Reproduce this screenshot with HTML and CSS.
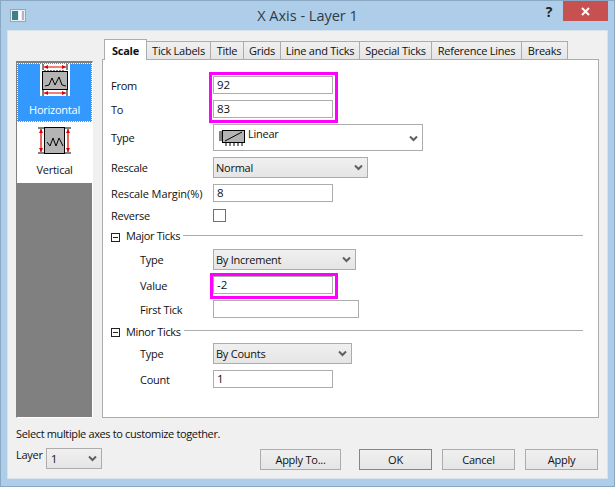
FILE: index.html
```html
<!DOCTYPE html>
<html>
<head>
<meta charset="utf-8">
<title>X Axis - Layer 1</title>
<link rel="stylesheet" href="styles.css">
</head>
<body>

<svg class="defs" width="0" height="0">
<symbol id="chev" viewBox="0 0 9 7"><path d="M1 1.5 L4.5 5 L8 1.5" fill="none" stroke="#606060" stroke-width="2"/></symbol>
<symbol id="minus" viewBox="0 0 9 9"><rect x="0.5" y="0.5" width="8" height="8" fill="#fff" stroke="#222"/><path d="M2 4.5 H7" stroke="#222"/></symbol>
</svg>

<div class="window">

<div class="titlebar">
<svg class="appicon" width="16" height="13" viewBox="0 0 16 13">
<rect x="0.5" y="0.5" width="15" height="12" fill="#e8eef2" stroke="#9aa5ad"/>
<rect x="2" y="2" width="6" height="9" fill="#3d7f8c"/>
<rect x="9" y="2" width="2" height="9" fill="#fff"/>
<rect x="12" y="2" width="2" height="9" fill="#a9b8c2"/>
</svg>
<div class="title">X Axis - Layer 1</div>
<div class="help">?</div>
<div class="close">
<svg width="9" height="9" viewBox="0 0 9 9"><path d="M1 1 L8 8 M8 1 L1 8" stroke="#fff" stroke-width="2"/></svg>
</div>
</div>

<div class="client">
<div class="main">

<div class="axislist">
<div class="axisitem selected">
<svg class="axisicon" width="30" height="32" viewBox="0 0 30 32">
<rect width="30" height="32" fill="#fff"/>
<path d="M3 0 V6 M27 0 V6 M3 26 V32 M27 26 V32" stroke="#000"/>
<path d="M4 3 H26 M4 29 H26" stroke="#e00000" stroke-width="1.2"/>
<path d="M8 1 L4 3 L8 5 Z M22 1 L26 3 L22 5 Z M8 27 L4 29 L8 31 Z M22 27 L26 29 L22 31 Z" fill="#e00000"/>
<path d="M5 6 V7 M8 6 V7 M11 6 V7 M14 6 V7 M17 6 V7 M20 6 V7 M23 6 V7 M5 25 V26 M8 25 V26 M11 25 V26 M14 25 V26 M17 25 V26 M20 25 V26 M23 25 V26" stroke="#000"/>
<rect x="2.5" y="7.5" width="25" height="18" fill="#b4b4b4" stroke="#000"/>
<path d="M5 22 L9 21 L12 14 L15 21 L19 13 L22 21 L26 22" fill="none" stroke="#000"/>
</svg>
<div class="axislabel">Horizontal</div>
</div>
<div class="axisitem">
<svg class="axisicon" width="34" height="28" viewBox="0 0 34 28">
<rect x="6.5" y="0.5" width="20" height="26" fill="#b4b4b4" stroke="#000"/>
<path d="M0 1 H6 M0 26 H6 M27 1 H33 M27 26 H33" stroke="#000"/>
<path d="M3 2 V25 M30 2 V25" stroke="#e00000" stroke-width="1.2"/>
<path d="M1 6 L3 2 L5 6 Z M28 6 L30 2 L32 6 Z M1 21 L3 25 L5 21 Z M28 21 L30 25 L32 21 Z" fill="#e00000"/>
<path d="M9 15 L12 19 L15 11 L18 19 L21 11 L25 19" fill="none" stroke="#000"/>
</svg>
<div class="axislabel">Vertical</div>
</div>
<div class="axisfill"></div>
</div>

<div class="tabarea">
<div class="tabs">
<div class="tab active">Scale</div>
<div class="tab w64">Tick Labels</div>
<div class="tab w33">Title</div>
<div class="tab w37">Grids</div>
<div class="tab w79">Line and Ticks</div>
<div class="tab w72">Special Ticks</div>
<div class="tab w90">Reference Lines</div>
<div class="tab w46">Breaks</div>
</div>

<div class="page">
<div class="row"><div class="label">From</div><div class="field w120">92</div></div>
<div class="row"><div class="label">To</div><div class="field w120">83</div></div>
<div class="row"><div class="label">Type</div>
<div class="field combo tall w210">
<svg class="lineicon" width="27" height="20" viewBox="0 0 27 20">
<rect x="4.5" y="2.5" width="22" height="12" fill="#b4b4b4" stroke="#000"/>
<path d="M7 13 L24 4" stroke="#000"/>
<path d="M1 4 H4 M1 6 H4 M1 8 H4 M1 10 H4 M1 12 H4 M8 15 V18 M12 15 V18 M16 15 V18 M20 15 V18 M24 15 V18" stroke="#000"/>
</svg>
<span class="linear">Linear</span>
<svg class="chev" width="9" height="7"><use href="#chev"/></svg>
</div>
</div>
<div class="row"><div class="label">Rescale</div><div class="select w155">Normal<svg class="chev" width="9" height="7"><use href="#chev"/></svg></div></div>
<div class="row"><div class="label wide">Rescale Margin(%)</div><div class="field w120">8</div></div>
<div class="row rev"><div class="label">Reverse</div><div class="check"></div></div>

<div class="section big">
<svg width="9" height="9"><use href="#minus"/></svg>
<span class="sectitle">Major Ticks</span>
<div class="rule"></div>
</div>
<div class="row sub"><div class="label">Type</div><div class="select w143">By Increment<svg class="chev" width="9" height="7"><use href="#chev"/></svg></div></div>
<div class="row sub"><div class="label">Value</div><div class="field w120">-2</div></div>
<div class="row sub"><div class="label">First Tick</div><div class="field w146"></div></div>

<div class="section">
<svg width="9" height="9"><use href="#minus"/></svg>
<span class="sectitle">Minor Ticks</span>
<div class="rule"></div>
</div>
<div class="row sub"><div class="label">Type</div><div class="select w139">By Counts<svg class="chev" width="9" height="7"><use href="#chev"/></svg></div></div>
<div class="row sub"><div class="label">Count</div><div class="field w120">1</div></div>

<div class="mark mark1"></div>
<div class="mark mark2"></div>
</div>
</div>
</div>

<div class="hint">Select multiple axes to customize together.</div>

<div class="bottom">
<div class="layerlabel">Layer</div>
<div class="select w56 layerselect">1<svg class="chev" width="9" height="7"><use href="#chev"/></svg></div>
<div class="button applyto">Apply To...</div>
<div class="button ok">OK</div>
<div class="button">Cancel</div>
<div class="button">Apply</div>
</div>
</div>

</div>

</body>
</html>
```

FILE: styles.css
```css
body{margin:0;
font-family:"Open Sans",sans-serif;
font-size:11px;
letter-spacing:-0.25px;
color:#111;}
.defs{position:absolute;}

.window{width:615px;height:487px;box-sizing:border-box;
background:#aecde8;
border:1px solid #8aa8c4;
display:flex;flex-direction:column;}

.titlebar{height:29px;flex:none;position:relative;}
.appicon{position:absolute;left:9px;top:8px;}
.title{text-align:center;font-size:14.5px;line-height:30px;color:#2e3b4a;letter-spacing:0;}
.help{position:absolute;left:540px;top:1px;font-size:14px;font-weight:700;line-height:20px;width:16px;text-align:center;color:#222;}
.close{position:absolute;left:562px;top:0;width:45px;height:20px;background:#c75050;
display:flex;align-items:center;justify-content:center;}

.client{flex:1;margin:0 6px 7px 6px;
background:#f0f0f0;border:1px solid #d8e2ea;
padding:8px 8px 0 8px;}

.main{display:flex;height:379px;}

.axislist{width:77px;height:357px;margin-top:22px;margin-right:9px;box-sizing:border-box;flex:none;
border-style:solid;border-color:#808080 #fff #fff #808080;border-width:2px 1px 1px 1px;
background:#fff;display:flex;flex-direction:column;}
.axisitem{height:61px;box-sizing:border-box;display:flex;flex-direction:column;align-items:center;padding-top:5px;}
.axisitem.selected{height:59px;padding-top:0;background:#3399ff;color:#fff;border:1px dotted #fff;}
.axisicon{flex:none;}
.axislabel{line-height:16px;margin-top:7px;}
.selected .axislabel{margin-top:6px;}
.axisfill{flex:1;background:#808080;}

.tabarea{width:497px;flex:none;}
.tabs{display:flex;height:21px;padding-left:2px;align-items:flex-end;position:relative;z-index:1;}
.tab{width:64px;height:18px;box-sizing:border-box;margin-bottom:1px;
border:1px solid #acacac;border-left:none;border-bottom:none;
background:linear-gradient(#f0f0f0,#e5e5e5);
text-align:center;line-height:17px;white-space:nowrap;}
.tab.active{width:43px;height:21px;margin-bottom:0;border-left:1px solid #acacac;background:#fff;font-weight:700;line-height:21px;}
.w33{width:33px;}
.w37{width:37px;}
.w46{width:46px;}
.w72{width:72px;}
.w79{width:79px;}
.w90{width:90px;}

.page{height:359px;box-sizing:border-box;margin-top:-1px;
background:#fff;border:1px solid #acacac;
padding:16px 15px 0 8px;
display:flex;flex-direction:column;gap:6px;
position:relative;}

.row{display:flex;align-items:center;}
.row.sub{padding-left:29px;}
.label{width:102px;flex:none;white-space:nowrap;}
.label.wide{letter-spacing:-0.1px;}
.sub .label{width:73px;}
.rev{margin-top:1px;height:13px;}

.field{height:18px;box-sizing:border-box;border:1px solid #acacac;background:#fff;
padding-left:3px;line-height:16px;color:#111;font-size:11.5px;letter-spacing:0;}
.select{height:21px;box-sizing:border-box;border:1px solid #acacac;
background:linear-gradient(#f0f0f0,#e5e5e5);
padding-left:2px;line-height:19px;display:flex;align-items:center;justify-content:space-between;padding-right:4px;}
.layerselect{padding-left:4px;}
.combo{display:flex;align-items:flex-start;padding-right:4px;}
.tall{height:27px;}
.lineicon{margin-top:3px;margin-left:1px;flex:none;}
.linear{margin-left:3px;line-height:18px;font-size:11px;letter-spacing:-0.25px;}
.combo .chev{margin-left:auto;margin-top:10px;}
.w120{width:120px;}
.w146{width:146px;}
.w210{width:210px;}
.w155{width:155px;}
.w143{width:143px;}
.w139{width:139px;}
.w56{width:56px;}
.check{width:13px;height:13px;box-sizing:border-box;border:1px solid #707070;}

.section{height:13px;box-sizing:border-box;display:flex;align-items:center;padding-top:1px;}
.section.big{height:15px;padding-top:0;}
.section svg{flex:none;}
.section.big svg{margin-top:4px;}
.section:not(.big) svg{margin-top:3px;}
.sectitle{margin-left:6px;margin-right:3px;white-space:nowrap;letter-spacing:-0.35px;}
.rule{flex:1;height:1px;background:#acacac;margin-bottom:1px;}

.mark{position:absolute;box-sizing:border-box;border:3px solid #ff00ff;}
.mark1{left:106px;top:12px;width:129px;height:51px;}
.mark2{left:107px;top:213px;width:128px;height:26px;}

.hint{line-height:16px;margin-top:8px;letter-spacing:-0.36px;}

.bottom{display:flex;align-items:flex-start;margin-top:6px;height:22px;padding-right:1px;}
.layerlabel{width:30px;line-height:15px;margin-top:-1px;}
.button{width:73px;height:21px;box-sizing:border-box;margin-left:10px;margin-top:1px;
border:1px solid #acacac;background:linear-gradient(#f0f0f0,#e5e5e5);
text-align:center;line-height:19px;}
.applyto{width:81px;margin-left:158px;margin-right:8px;}
.ok{border-color:#3399ff;}
```
